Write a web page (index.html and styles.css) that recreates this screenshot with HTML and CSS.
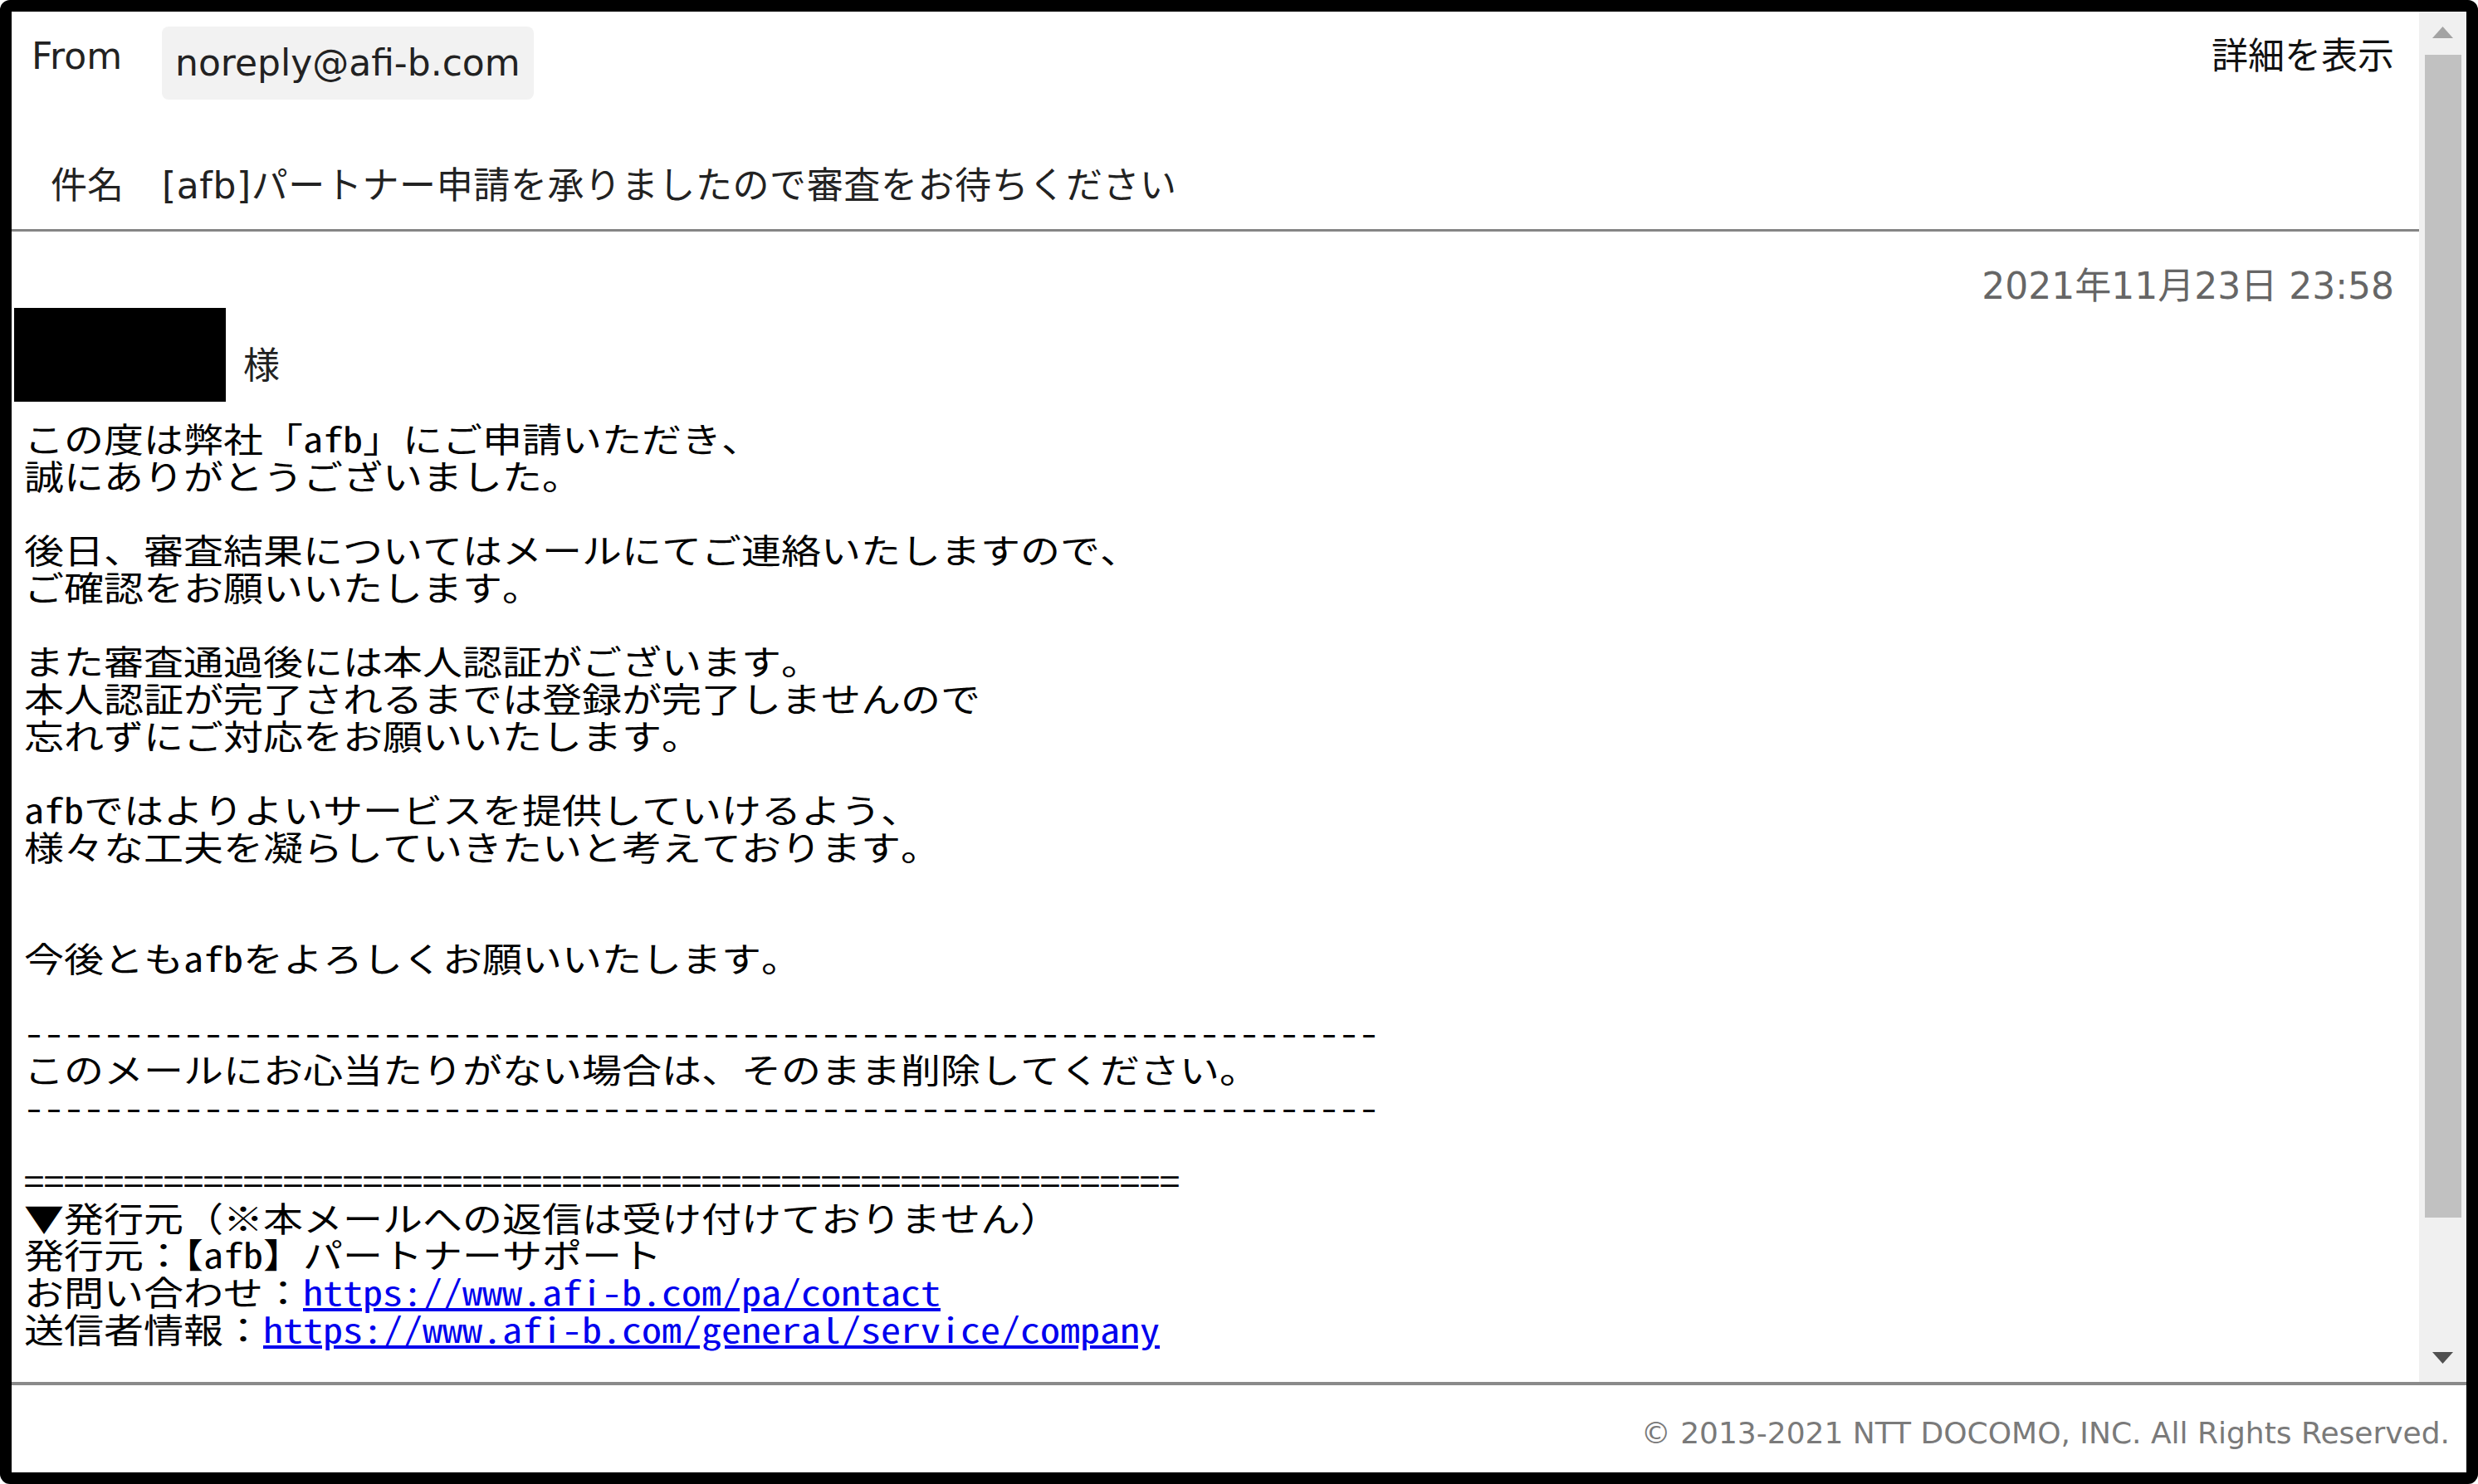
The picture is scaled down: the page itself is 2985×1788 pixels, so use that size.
FILE: index.html
```html
<!DOCTYPE html>
<html lang="ja">
<head>
    <meta charset="UTF-8">
    <meta name="viewport" content="width=device-width, initial-scale=1.0">
    <title>[afb]パートナー申請を承りましたので審査をお待ちください</title>
    <link rel="stylesheet" href="styles.css">
</head>
<body>
<div class="frame">
    <div class="viewer">
        <div class="mail">
            <div class="mail-head">
                <div class="from-row">
                    <span class="label">From</span>
                    <span class="sender">noreply@afi-b.com</span>
                    <span class="detail">詳細を表示</span>
                </div>
                <div class="subject-row">
                    <span class="label label-subject">件名</span>
                    <span class="subject">[afb]パートナー申請を承りましたので審査をお待ちください</span>
                </div>
            </div>

            <div class="mail-body">
                <div class="date">2021年11月23日 23:58</div>
                <div class="greeting">
                    <span class="masked"></span>
                    <span class="honorific">様</span>
                </div>
<pre class="text">この度は弊社「afb」にご申請いただき、
誠にありがとうございました。

後日、審査結果についてはメールにてご連絡いたしますので、
ご確認をお願いいたします。

また審査通過後には本人認証がございます。
本人認証が完了されるまでは登録が完了しませんので
忘れずにご対応をお願いいたします。

afbではよりよいサービスを提供していけるよう、
様々な工夫を凝らしていきたいと考えております。


今後ともafbをよろしくお願いいたします。

--------------------------------------------------------------------
このメールにお心当たりがない場合は、そのまま削除してください。
--------------------------------------------------------------------

==========================================================
▼発行元（※本メールへの返信は受け付けておりません）
発行元：【afb】パートナーサポート
お問い合わせ：<a href="#">https://www.afi-b.com/pa/contact</a>
送信者情報：<a href="#">https://www.afi-b.com/general/service/company</a>
</pre>
            </div>
        </div>

        <div class="scrollbar">
            <svg class="arrow" width="25" height="14" viewBox="0 0 25 14">
                <polygon points="12.5,0 25,14 0,14" fill="#a3a3a3"/>
            </svg>
            <div class="thumb"></div>
            <svg class="arrow arrow-down" width="25" height="14" viewBox="0 0 25 14">
                <polygon points="0,0 25,0 12.5,14" fill="#505050"/>
            </svg>
        </div>
    </div>

    <div class="footer">© 2013-2021 NTT DOCOMO, INC. All Rights Reserved.</div>
</div>
</body>
</html>
```

FILE: styles.css
```css
body{
    margin: 0;
    background: #fff;
}

.frame{
    height: 1788px;
    box-sizing: border-box;
    border: 14px solid #000;
    border-radius: 12px;
    display: flex;
    flex-direction: column;
    background: #fff;
    font-family: "DejaVu Sans", "Noto Sans CJK JP", sans-serif;
    color: #222;
}

.viewer{
    display: flex;
    height: 1651px;
}

.mail{
    flex: 1;
    overflow: hidden;
}

/* header: from / subject */
.mail-head{
    padding: 18px 30px 26px 24px;
    border-bottom: 3px solid #858585;
    font-size: 44px;
}
.from-row{
    display: flex;
    align-items: flex-start;
}
.label{
    width: 157px;
    flex-shrink: 0;
    margin-top: 10px;
    line-height: 52px;
}
.sender{
    height: 88px;
    line-height: 88px;
    padding: 0 16px;
    background: #f2f2f2;
    border-radius: 8px;
}
.detail{
    margin-left: auto;
    margin-top: 10px;
    line-height: 52px;
    color: #111;
}
.subject-row{
    display: flex;
    margin-top: 78px;
    line-height: 52px;
}
.label-subject{
    margin-top: 0;
    width: 134px;
    padding-left: 23px;
}
.subject{
    letter-spacing: 0.6px;
}

/* body */
.mail-body{
    padding-right: 30px;
}
.date{
    margin-top: 40px;
    text-align: right;
    font-size: 44px;
    line-height: 52px;
    color: #666;
}
.greeting{
    display: flex;
    align-items: flex-end;
    margin-left: 3px;
}
.masked{
    width: 255px;
    height: 113px;
    background: #000;
}
.honorific{
    margin: 0 0 17px 21px;
    font-size: 44px;
    line-height: 52px;
}
.text{
    margin: 21px 0 0 15px;
    font-family: "Noto Sans Mono CJK JP", "Noto Sans CJK JP", monospace;
    font-size: 41px;
    line-height: 44.7px;
    color: #000;
    white-space: pre;
    /* the mail client draws its gothic text wide */
    transform: scaleX(1.1707);
    transform-origin: left top;
}
.text a{
    display: inline-block;
    line-height: 44.7px;
    color: #0000ee;
    text-decoration: underline;
}

/* scrollbar */
.scrollbar{
    width: 57px;
    box-sizing: border-box;
    padding: 18px 0 22px;
    background: #f0f0f0;
    display: flex;
    flex-direction: column;
    align-items: center;
}
.arrow{
    display: block;
    flex-shrink: 0;
}
.thumb{
    width: 44px;
    height: 1401px;
    margin-top: 20px;
    background: #c1c1c1;
}
.arrow-down{
    margin-top: auto;
}

.footer{
    flex: 1;
    border-top: 4px solid #8a8a8a;
    padding: 32px 20px 0 0;
    text-align: right;
    font-size: 36px;
    line-height: 52px;
    color: #7a7a7a;
}
```
